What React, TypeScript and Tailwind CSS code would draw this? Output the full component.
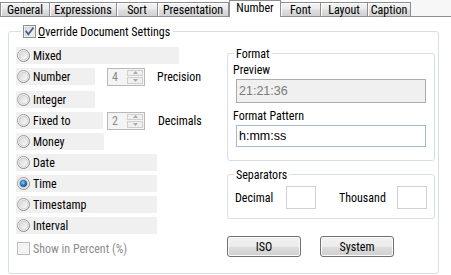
import React, { useId } from "react";

function Radio({ checked = false }: { checked?: boolean }) {
  const id = useId().replace(/:/g, "");
  return (
    <svg width="13" height="13" viewBox="0 0 13 13" className="shrink-0">
      <defs>
        <linearGradient id={`o${id}`} x1="0" y1="0" x2="1" y2="1">
          <stop offset="0" stopColor="#a7a7a7" />
          <stop offset="1" stopColor="#808080" />
        </linearGradient>
        <linearGradient id={`i${id}`} x1="0" y1="0" x2="1" y2="1">
          <stop offset="0" stopColor="#d6d6d6" />
          <stop offset="1" stopColor="#fbfbfb" />
        </linearGradient>
        <radialGradient id={`s${id}`} cx="0.4" cy="0.35" r="0.7">
          <stop offset="0" stopColor="#8ad0ff" />
          <stop offset="0.5" stopColor="#2f8ad8" />
          <stop offset="1" stopColor="#0f3f7a" />
        </radialGradient>
      </defs>
      <circle cx="6.5" cy="6.5" r="6" fill="#f6f6f6" stroke={`url(#o${id})`} strokeWidth="1" />
      <circle cx="6.5" cy="6.5" r="4.4" fill={`url(#i${id})`} stroke="#c8c8c8" strokeWidth="0.8" />
      {checked && <circle cx="6.5" cy="6.5" r="3.3" fill={`url(#s${id})`} stroke="#1c4f8a" strokeWidth="0.6" />}
    </svg>
  );
}

function CheckBox({ checked = false, disabled = false }: { checked?: boolean; disabled?: boolean }) {
  const id = useId().replace(/:/g, "");
  return (
    <svg width="13" height="13" viewBox="0 0 13 13" className="shrink-0">
      <defs>
        <linearGradient id={`c${id}`} x1="0" y1="0" x2="1" y2="1">
          <stop offset="0" stopColor={disabled ? "#f4f4f4" : "#d9d9d9"} />
          <stop offset="1" stopColor={disabled ? "#f4f4f4" : "#fbfbfb"} />
        </linearGradient>
      </defs>
      <rect x="0.5" y="0.5" width="12" height="12" fill="#ffffff" stroke={disabled ? "#b8b8b8" : "#8e8f8f"} />
      <rect x="2" y="2" width="9" height="9" fill={`url(#c${id})`} stroke={disabled ? "#e6e6e6" : "#c4c4c4"} strokeWidth="0.6" />
      {checked && (
        <path d="M3.2 6.6 L5.4 9.2 L9.9 3.2" fill="none" stroke="#4a5c94" strokeWidth="1.8" strokeLinecap="square" />
      )}
    </svg>
  );
}

function Spin({ value }: { value: string }) {
  return (
    <div className="flex w-[38px] h-[18px] border border-[#b9b9b9] bg-[#f4f4f4]">
      <div className="flex-1 pl-[4px] flex items-center text-[#8a8a8a]">{value}</div>
      <div className="w-[17px] flex flex-col pt-[1px] pb-[1px] pr-[1px] gap-[1px]">
        <div className="flex-1 border border-[#cfcfcf] bg-[#f0f0f0] flex items-center justify-center">
          <svg width="5" height="3" viewBox="0 0 5 3"><path d="M0 3 L2.5 0 L5 3 Z" fill="#a8a8a8" /></svg>
        </div>
        <div className="flex-1 border border-[#cfcfcf] bg-[#f0f0f0] flex items-center justify-center">
          <svg width="5" height="3" viewBox="0 0 5 3"><path d="M0 0 L2.5 3 L5 0 Z" fill="#a8a8a8" /></svg>
        </div>
      </div>
    </div>
  );
}

function RadioRow({
  label,
  bg,
  mt,
  checked = false,
  children,
}: {
  label: string;
  bg: string;
  mt: string;
  checked?: boolean;
  children?: React.ReactNode;
}) {
  return (
    <div className={`flex items-center h-[17px] ${mt}`}>
      <div className={`h-full bg-[#f0f0f0] flex items-center pl-[1px] gap-[3px] ${bg}`}>
        <Radio checked={checked} />
        <span className="whitespace-nowrap">{label}</span>
      </div>
      {children}
    </div>
  );
}

const tabBase =
  "h-[15px] mt-[2px] border-t border-r border-b border-[#8c8e94] flex items-center justify-center whitespace-nowrap bg-[linear-gradient(to_bottom,#f4f4f4_0%,#ebebeb_45%,#dedede_55%,#d2d2d2_100%)] shadow-[inset_1px_1px_0_#ffffff]";

function Tabs() {
  return (
    <div className="flex h-[17px] items-start">
      <div className={`${tabBase} w-[50px] border-l`}>General</div>
      <div className={`${tabBase} w-[67px]`}>Expressions</div>
      <div className={`${tabBase} w-[41px]`}>Sort</div>
      <div className={`${tabBase} w-[71px]`}>Presentation</div>
      <div className="w-[52px] h-[17px] border-t border-l border-r border-[#8c8e94] bg-white flex items-start justify-center whitespace-nowrap">
        Number
      </div>
      <div className={`${tabBase} w-[40px]`}>Font</div>
      <div className={`${tabBase} w-[47px]`}>Layout</div>
      <div className={`${tabBase} w-[43px]`}>Caption</div>
      <div className="flex-1 h-[17px] border-b border-[#8c8e94] bg-[#f7f7f7]" />
    </div>
  );
}

function Button({ label }: { label: string }) {
  return (
    <div className="w-[74px] h-[21px] border border-[#707070] rounded-[3px] flex items-center justify-center bg-[linear-gradient(to_bottom,#f2f2f2_0%,#ebebeb_50%,#dddddd_51%,#cfcfcf_100%)] shadow-[inset_0_0_0_1px_#fbfbfb]">
      {label}
    </div>
  );
}

export default function App() {
  return (
    <div className="w-[451px] h-[275px] bg-white overflow-hidden text-black text-[12px] leading-[14px] font-normal font-['Roboto','Liberation_Sans',sans-serif] [font-stretch:75%]">
      <Tabs />
      <div className="relative ml-[8px] mt-[14px] w-[431px] h-[243px] border border-[#d5dfe5] rounded-[3px] flex">
        <div className="absolute left-[12px] top-[-8px] h-[15px] bg-white flex items-center gap-[2px] pl-[2px] pr-[3px]">
          <CheckBox checked />
          <span className="whitespace-nowrap">
            <span className="underline underline-offset-[1px]">O</span>verride Document Settings
          </span>
        </div>

        <div className="w-[218px] pl-[7px] pt-[15px] flex flex-col">
          <RadioRow label="Mixed" bg="w-[163px]" mt="mt-0" />
          <RadioRow label="Number" bg="w-[79px]" mt="mt-[4px]">
            <div className="ml-[12px]">
              <Spin value="4" />
            </div>
            <span className="ml-[12px]">Precision</span>
          </RadioRow>
          <RadioRow label="Integer" bg="w-[79px]" mt="mt-[6px]" />
          <RadioRow label="Fixed to" bg="w-[87px]" mt="mt-[4px]">
            <div className="ml-[4px]">
              <Spin value="2" />
            </div>
            <span className="ml-[13px]">Decimals</span>
          </RadioRow>
          <RadioRow label="Money" bg="w-[88px]" mt="mt-[4px]" />
          <RadioRow label="Date" bg="w-[141px]" mt="mt-[4px]" />
          <RadioRow label="Time" bg="w-[141px]" mt="mt-[4px]" checked />
          <RadioRow label="Timestamp" bg="w-[141px]" mt="mt-[4px]" />
          <RadioRow label="Interval" bg="w-[141px]" mt="mt-[4px]" />
          <div className="flex items-center h-[15px] mt-[7px] pl-[1px] gap-[3px] text-[#8d8d8d]">
            <CheckBox disabled />
            <span className="whitespace-nowrap">Show in Percent (%)</span>
          </div>
        </div>

        <div className="w-[208px] mr-[3px] pt-[21px] flex flex-col">
          <div className="relative h-[108px] border border-[#d5dfe5] rounded-[3px] pt-[9px] pl-[5px] pr-[8px]">
            <div className="absolute left-[6px] top-[-8px] h-[15px] bg-white px-[2px] flex items-center">Format</div>
            <div className="h-[14px]">Preview</div>
            <div className="mt-[2px] ml-[3px] h-[24px] border border-[#acacac] bg-[#f0f0f0] flex items-center pl-[2px] text-[#7a7a7a] font-['Liberation_Sans','Arial',sans-serif] [font-stretch:100%] text-[12.5px]">
              21:21:36
            </div>
            <div className="mt-[6px] h-[14px]">Format Pattern</div>
            <div className="mt-[2px] ml-[3px] h-[22px] border border-[#a3b9d2] bg-white flex items-center pl-[2px] font-['Liberation_Sans','Arial',sans-serif] [font-stretch:100%] text-[12.5px]">
              h:mm:ss
            </div>
          </div>

          <div className="relative mt-[13px] h-[45px] border border-[#d5dfe5] rounded-[3px] pt-[11px] pl-[7px] flex items-start">
            <div className="absolute left-[6px] top-[-8px] h-[15px] bg-white px-[2px] flex items-center">Separators</div>
            <div className="flex items-center">
              <span className="w-[51px]">Decimal</span>
              <div className="w-[30px] h-[23px] border border-[#d0d0d0] bg-white" />
              <span className="ml-[23px] w-[58px]">Thousand</span>
              <div className="w-[30px] h-[23px] border border-[#d0d0d0] bg-white" />
            </div>
          </div>

          <div className="mt-[17px] flex gap-[19px]">
            <Button label="ISO" />
            <Button label="System" />
          </div>
        </div>
      </div>
    </div>
  );
}
